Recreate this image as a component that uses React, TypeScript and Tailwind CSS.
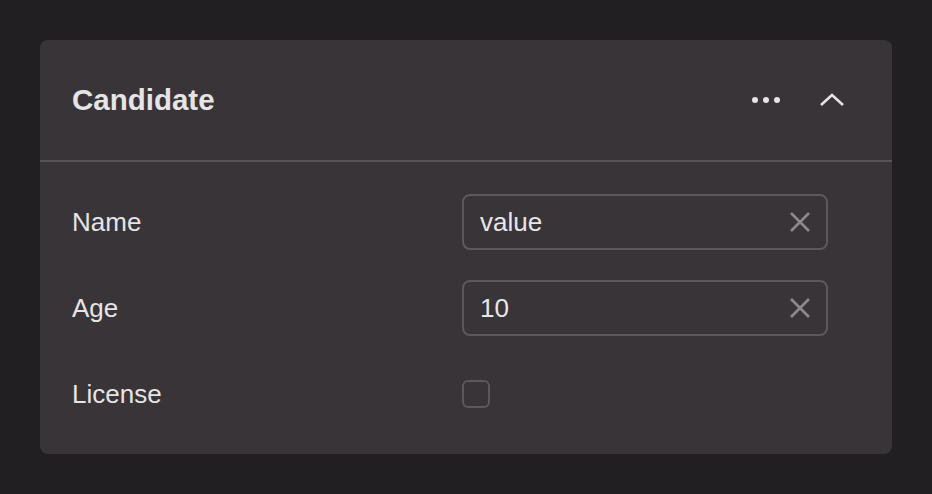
import React, { useState } from 'react';

interface TextFieldProps {
    value: string;
}

const TextField: React.FC<TextFieldProps> = ({ value }) => {
    const [text, setText] = useState(value);

    return (
        <div className="flex items-center h-14 w-[366px] rounded-lg border-2 border-[#5c585c] pl-4 pr-3">
            <input
                value={text}
                onChange={(e) => setText(e.target.value)}
                className="flex-1 min-w-0 bg-transparent outline-none text-[26px] text-[#e8e6e8]"
            />
            <button onClick={() => setText('')} className="w-7 h-7 flex items-center justify-center text-[#8c888c]">
                <svg width="22" height="22" viewBox="0 0 22 22" fill="none" stroke="currentColor" strokeWidth="2.6" strokeLinecap="butt">
                    <path d="M2 2 L20 20 M20 2 L2 20" />
                </svg>
            </button>
        </div>
    );
};

const App: React.FC = () => {
    const [open, setOpen] = useState(true);
    const [license, setLicense] = useState(false);

    return (
        <div className="min-h-[494px] bg-[#221f23] p-10 font-['Liberation_Sans',Arial,sans-serif]">
            <div className="rounded-lg bg-[#383438] overflow-hidden">
                {/* Header */}
                <div className="h-[122px] flex items-center justify-between pl-8 pr-10 border-b-2 border-[#57535a]">
                    <h2 className="text-[29.5px] font-bold text-[#e6e4e6]">Candidate</h2>
                    <div className="flex items-center gap-[26px]">
                        <button className="w-10 h-10 flex items-center justify-center text-[#e6e4e6]">
                            <svg width="28" height="8" viewBox="0 0 28 8" fill="currentColor">
                                <circle cx="3" cy="4" r="3" />
                                <circle cx="14" cy="4" r="3" />
                                <circle cx="25" cy="4" r="3" />
                            </svg>
                        </button>
                        <button onClick={() => setOpen(!open)} className="w-10 h-10 flex items-center justify-center text-[#e6e4e6]">
                            <svg width="26" height="16" viewBox="0 0 26 16" fill="none" stroke="currentColor" strokeWidth="2.6">
                                <path d={open ? 'M2 13 L13 3 L24 13' : 'M2 3 L13 13 L24 3'} />
                            </svg>
                        </button>
                    </div>
                </div>

                {/* Body */}
                {open && (
                    <div className="px-8 py-8 grid grid-cols-[390px_366px] gap-y-[30px] items-center text-[26px] text-[#e6e4e6]">
                        <span>Name</span>
                        <TextField value="value" />
                        <span>Age</span>
                        <TextField value="10" />
                        <span>License</span>
                        <div className="h-14 flex items-center">
                            <button
                                onClick={() => setLicense(!license)}
                                className="w-7 h-7 rounded-md border-2 border-[#5c585c] flex items-center justify-center"
                            >
                                {license && (
                                    <svg width="16" height="16" viewBox="0 0 16 16" fill="none" stroke="#e6e4e6" strokeWidth="2.4">
                                        <path d="M2 8 L6 12 L14 3" />
                                    </svg>
                                )}
                            </button>
                        </div>
                    </div>
                )}
            </div>
        </div>
    );
};

export default App;
